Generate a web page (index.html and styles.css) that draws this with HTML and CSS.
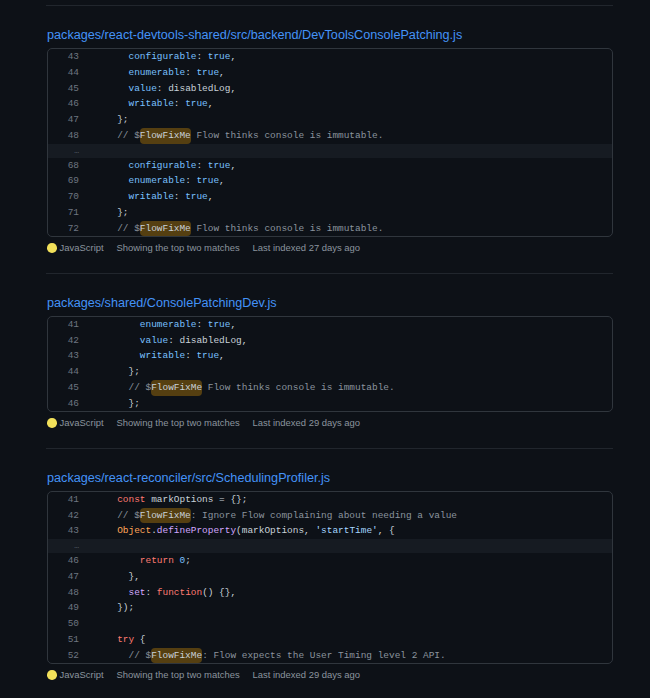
FILE: index.html
```html
<!DOCTYPE html>
<html lang="en">
<head>
<meta charset="utf-8">
<title>Code search results</title>
<link rel="stylesheet" href="styles.css">
</head>
<body>
<main class="results">

  <section class="result">
    <a class="path" href="#">packages/react-devtools-shared/src/backend/DevToolsConsolePatching.js</a>
    <div class="code">
      <div class="line"><span class="num">43</span><span class="src">      <span class="c">configurable</span>: <span class="c">true</span>,</span></div>
      <div class="line"><span class="num">44</span><span class="src">      <span class="c">enumerable</span>: <span class="c">true</span>,</span></div>
      <div class="line"><span class="num">45</span><span class="src">      <span class="c">value</span>: disabledLog,</span></div>
      <div class="line"><span class="num">46</span><span class="src">      <span class="c">writable</span>: <span class="c">true</span>,</span></div>
      <div class="line"><span class="num">47</span><span class="src">    };</span></div>
      <div class="line"><span class="num">48</span><span class="src">    <span class="cm">// $<span class="match">FlowFixMe</span> Flow thinks console is immutable.</span></span></div>
      <div class="gap"><span class="dots">…</span></div>
      <div class="line"><span class="num">68</span><span class="src">      <span class="c">configurable</span>: <span class="c">true</span>,</span></div>
      <div class="line"><span class="num">69</span><span class="src">      <span class="c">enumerable</span>: <span class="c">true</span>,</span></div>
      <div class="line"><span class="num">70</span><span class="src">      <span class="c">writable</span>: <span class="c">true</span>,</span></div>
      <div class="line"><span class="num">71</span><span class="src">    };</span></div>
      <div class="line"><span class="num">72</span><span class="src">    <span class="cm">// $<span class="match">FlowFixMe</span> Flow thinks console is immutable.</span></span></div>
    </div>
    <div class="meta">
      <span class="lang"><span class="dot"></span>JavaScript</span>
      <span>Showing the top two matches</span>
      <span>Last indexed 27 days ago</span>
    </div>
  </section>

  <section class="result">
    <a class="path" href="#">packages/shared/ConsolePatchingDev.js</a>
    <div class="code">
      <div class="line"><span class="num">41</span><span class="src">        <span class="c">enumerable</span>: <span class="c">true</span>,</span></div>
      <div class="line"><span class="num">42</span><span class="src">        <span class="c">value</span>: disabledLog,</span></div>
      <div class="line"><span class="num">43</span><span class="src">        <span class="c">writable</span>: <span class="c">true</span>,</span></div>
      <div class="line"><span class="num">44</span><span class="src">      };</span></div>
      <div class="line"><span class="num">45</span><span class="src">      <span class="cm">// $<span class="match">FlowFixMe</span> Flow thinks console is immutable.</span></span></div>
      <div class="line"><span class="num">46</span><span class="src">      };</span></div>
    </div>
    <div class="meta">
      <span class="lang"><span class="dot"></span>JavaScript</span>
      <span>Showing the top two matches</span>
      <span>Last indexed 29 days ago</span>
    </div>
  </section>

  <section class="result">
    <a class="path" href="#">packages/react-reconciler/src/SchedulingProfiler.js</a>
    <div class="code">
      <div class="line"><span class="num">41</span><span class="src">    <span class="k">const</span> markOptions = {};</span></div>
      <div class="line"><span class="num">42</span><span class="src">    <span class="cm">// $<span class="match">FlowFixMe</span>: Ignore Flow complaining about needing a value</span></span></div>
      <div class="line"><span class="num">43</span><span class="src">    <span class="o">Object</span>.<span class="f">defineProperty</span>(markOptions, <span class="s">'startTime'</span>, {</span></div>
      <div class="gap"><span class="dots">…</span></div>
      <div class="line"><span class="num">46</span><span class="src">        <span class="k">return</span> <span class="c">0</span>;</span></div>
      <div class="line"><span class="num">47</span><span class="src">      },</span></div>
      <div class="line"><span class="num">48</span><span class="src">      <span class="f">set</span>: <span class="k">function</span>() {},</span></div>
      <div class="line"><span class="num">49</span><span class="src">    });</span></div>
      <div class="line"><span class="num">50</span><span class="src"> </span></div>
      <div class="line"><span class="num">51</span><span class="src">    <span class="k">try</span> {</span></div>
      <div class="line"><span class="num">52</span><span class="src">      <span class="cm">// $<span class="match">FlowFixMe</span>: Flow expects the User Timing level 2 API.</span></span></div>
    </div>
    <div class="meta">
      <span class="lang"><span class="dot"></span>JavaScript</span>
      <span>Showing the top two matches</span>
      <span>Last indexed 29 days ago</span>
    </div>
  </section>

</main>
</body>
</html>
```

FILE: styles.css
```css
html, body {
  margin: 0;
  padding: 0;
  background: #0d1117;
}

body {
  font-family: "Liberation Sans", Arial, sans-serif;
  color: #c9d1d9;
}

.results {
  margin-left: 46px;
  width: 567px;
  padding-top: 5px;
}

.result {
  border-top: 1px solid #21262d;
  padding-top: 21px;
  padding-bottom: 18px;
}

.path {
  display: block;
  color: #4493f8;
  text-decoration: none;
  font-size: 12.65px;
  line-height: 16px;
  margin-bottom: 5px;
  padding-left: 1px;
}

.code {
  margin-left: 1px;
  border: 1px solid #30363d;
  border-radius: 5px;
  overflow: hidden;
  font-family: "Liberation Mono", "DejaVu Sans Mono", monospace;
  font-size: 9.45px;
  line-height: 15.75px;
}

.line {
  display: flex;
  height: 15.75px;
}

.num {
  flex: 0 0 31px;
  text-align: right;
  color: #6e7681;
}

.src {
  padding-left: 15.5px;
  white-space: pre;
  color: #c9d1d9;
}

.gap {
  height: 14px;
  background: #161b22;
  display: flex;
  align-items: center;
}

.dots {
  flex: 0 0 31px;
  text-align: right;
  color: #6e7681;
  font-size: 8px;
  line-height: 14px;
}

.c { color: #79c0ff; }
.k { color: #ff7b72; }
.o { color: #ffa657; }
.f { color: #d2a8ff; }
.s { color: #a5d6ff; }
.cm { color: #8b949e; }

.match {
  display: inline-block;
  background: rgba(187, 128, 9, 0.42);
  border-radius: 4px;
  color: #c9d1d9;
  height: 15.75px;
  vertical-align: top;
}

.meta {
  display: flex;
  gap: 12.8px;
  margin-top: 3.5px;
  margin-left: 1px;
  font-size: 9.45px;
  line-height: 14px;
  color: #8b949e;
}

.lang {
  display: flex;
  align-items: center;
  gap: 3px;
}

.dot {
  width: 9.6px;
  height: 9.6px;
  border-radius: 50%;
  background: #f1e05a;
}
```
